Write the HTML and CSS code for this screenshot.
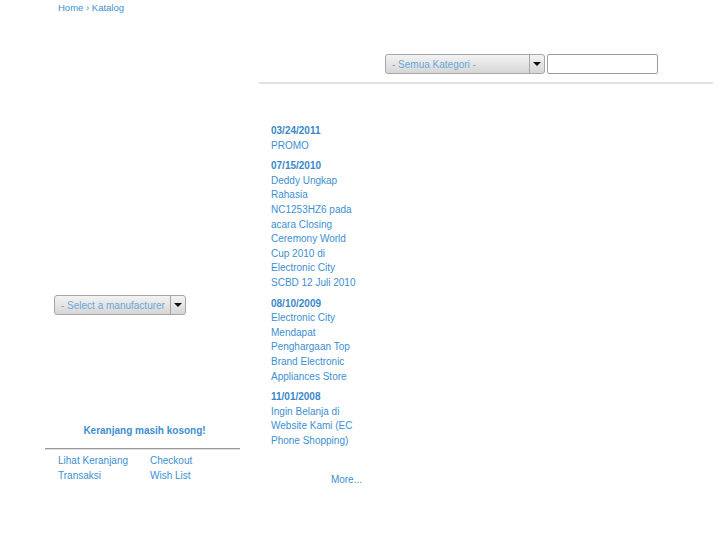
FILE: index.html
```html
<!DOCTYPE html>
<html>
<head>
<meta charset="utf-8">
<link rel="stylesheet" href="styles.css">
</head>
<body>
<div class="page">
  <div class="left">
    <div class="crumbs"><a href="#">Home</a> › <a href="#">Katalog</a></div>
    <div class="manuf">
      <div class="select select-manuf">
        <span class="select-label">- Select a manufacturer</span>
        <span class="select-btn"><i class="tri"></i></span>
      </div>
    </div>
    <div class="cart">
      <div class="cart-title">Keranjang masih kosong!</div>
      <div class="cart-links">
        <a href="#">Lihat Keranjang</a>
        <a href="#">Checkout</a>
        <a href="#">Transaksi</a>
        <a href="#">Wish List</a>
      </div>
    </div>
  </div>
  <div class="main">
    <div class="search">
      <div class="select select-cat">
        <span class="select-label">- Semua Kategori -</span>
        <span class="select-btn"><i class="tri"></i></span>
      </div>
      <input class="search-input" type="text">
    </div>
    <div class="news">
      <div class="news-item">
        <div class="news-date">03/24/2011</div>
        <a href="#" class="news-title">PROMO</a>
      </div>
      <div class="news-item">
        <div class="news-date">07/15/2010</div>
        <a href="#" class="news-title">Deddy Ungkap Rahasia NC1253HZ6 pada acara Closing Ceremony World Cup 2010 di Electronic City SCBD 12 Juli 2010</a>
      </div>
      <div class="news-item">
        <div class="news-date">08/10/2009</div>
        <a href="#" class="news-title">Electronic City Mendapat Penghargaan Top Brand Electronic Appliances Store</a>
      </div>
      <div class="news-item">
        <div class="news-date">11/01/2008</div>
        <a href="#" class="news-title">Ingin Belanja di Website Kami (EC Phone Shopping)</a>
      </div>
      <div class="news-more"><a href="#">More...</a></div>
    </div>
  </div>
</div>
</body>
</html>
```
FILE: styles.css
```css
html, body {
  margin: 0;
  padding: 0;
  background: #ffffff;
}
body {
  font-family: "Liberation Sans", Arial, sans-serif;
  font-size: 10px;
  line-height: 14.6px;
  color: #3d8fd1;
}
a {
  color: #3d8fd1;
  text-decoration: none;
}
.page {
  display: flex;
  gap: 19px;
  padding-left: 45px;
}
.left {
  width: 195px;
  display: flex;
  flex-direction: column;
}
.crumbs {
  padding-left: 13px;
  padding-top: 1px;
  font-size: 9.5px;
}
.manuf {
  margin-top: 279px;
  padding-left: 9px;
}
.select {
  display: flex;
  box-sizing: border-box;
  height: 20px;
  border: 1px solid #a6a6a6;
  border-radius: 3px;
  background: linear-gradient(#f3f3f3, #d6d6d6);
  overflow: hidden;
}
.select-label {
  flex: 1;
  padding-left: 6px;
  line-height: 19px;
  color: #6aa8da;
  white-space: nowrap;
  overflow: hidden;
}
.select-btn {
  width: 14px;
  border-left: 1px solid #a6a6a6;
  display: flex;
  align-items: center;
  justify-content: center;
}
.tri {
  width: 0;
  height: 0;
  border-left: 4px solid transparent;
  border-right: 4px solid transparent;
  border-top: 4px solid #111;
}
.select-manuf {
  width: 132px;
}
.select-cat {
  width: 160px;
}
.cart {
  margin-top: 109px;
}
.cart-title {
  text-align: center;
  font-weight: bold;
  padding-left: 4px;
}
.cart-links {
  margin-top: 10px;
  border-top: 1px solid #9a9a9a;
  box-shadow: 0 1px 0 #dcdcdc inset;
  padding: 5px 0 0 13px;
  display: grid;
  grid-template-columns: 92px auto;
}
.main {
  width: 454px;
}
.search {
  margin-top: 54px;
  padding-left: 126px;
  display: flex;
  gap: 2px;
  padding-bottom: 8px;
  border-bottom: 2px solid #e2e2e2;
}
.search-input {
  box-sizing: border-box;
  width: 111px;
  height: 20px;
  margin: 0;
  border: 1px solid #9c9c9c;
  border-radius: 2px;
  background: #fff;
  padding: 0 3px;
}
.news {
  margin-top: 40px;
  margin-left: 12px;
  width: 91px;
}
.news-item {
  margin-bottom: 6px;
}
.news-date {
  font-weight: bold;
  color: #3a88c8;
}
.news-title {
  display: block;
}
.news-more {
  margin-top: 25px;
  text-align: right;
}
```
